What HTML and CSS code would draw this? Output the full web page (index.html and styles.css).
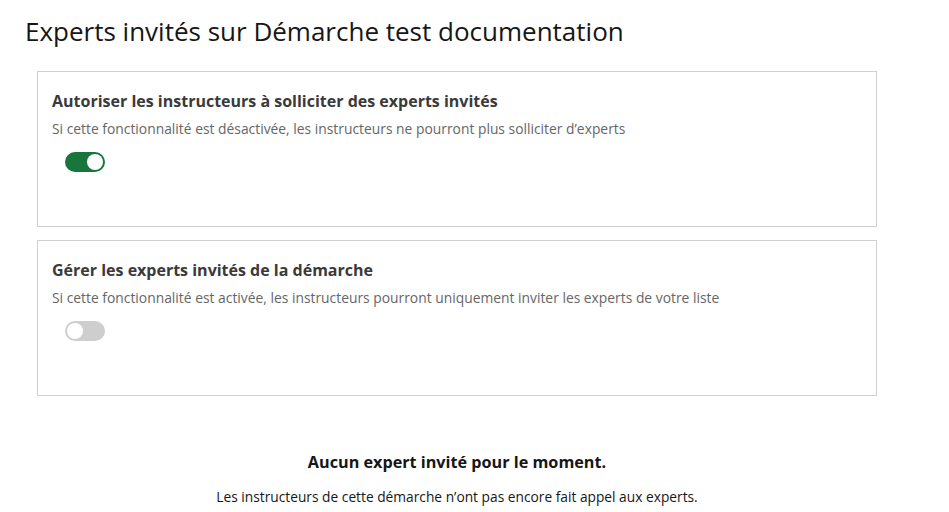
FILE: index.html
```html
<!DOCTYPE html>
<html lang="fr">
<head>
<meta charset="utf-8">
<link rel="stylesheet" href="styles.css">
</head>
<body>
<main class="page">
  <h1 class="title">Experts invités sur Démarche test documentation</h1>
  <section class="cards">
    <div class="card">
      <h2 class="card-title">Autoriser les instructeurs à solliciter des experts invités</h2>
      <p class="card-desc">Si cette fonctionnalité est désactivée, les instructeurs ne pourront plus solliciter d’experts</p>
      <span class="toggle toggle-on"><span class="knob"></span></span>
    </div>
    <div class="card">
      <h2 class="card-title">Gérer les experts invités de la démarche</h2>
      <p class="card-desc">Si cette fonctionnalité est activée, les instructeurs pourront uniquement inviter les experts de votre liste</p>
      <span class="toggle toggle-off"><span class="knob"></span></span>
    </div>
    <div class="empty">
      <p class="empty-title">Aucun expert invité pour le moment.</p>
      <p class="empty-desc">Les instructeurs de cette démarche n’ont pas encore fait appel aux experts.</p>
    </div>
  </section>
</main>
</body>
</html>
```
FILE: styles.css
```css
* { box-sizing: border-box; }
html, body { margin: 0; padding: 0; background: #fff; }
body { font-family: "Open Sans", "Liberation Sans", sans-serif; color: #161616; }
.page { padding: 13px 0 0 25px; }
.title { margin: 0; font-size: 26px; font-weight: 400; line-height: 36px; color: #161616; }
.cards { width: 840px; margin: 22px 0 0 12px; display: flex; flex-direction: column; gap: 13px; }
.card { border: 1px solid #d0d0d0; padding: 16px 14px 54px; display: flex; flex-direction: column; }
.card-title { margin: 0; font-size: 16px; font-weight: 700; line-height: 26px; color: #3a3a3a; }
.card-desc { margin: 4px 0 0; font-size: 13.85px; line-height: 22px; color: #666; }
.toggle { margin: 12px 0 0 13px; width: 40px; height: 20px; border-radius: 10px; position: relative; display: block; }
.toggle-on { background: #18753c; }
.toggle-off { background: #cecece; }
.knob { position: absolute; top: 2px; width: 16px; height: 16px; border-radius: 50%; background: #fff; }
.toggle-on .knob { right: 2px; }
.toggle-off .knob { left: 2px; }
.empty { margin-top: 41px; text-align: center; }
.empty-title { margin: 0; font-size: 16.2px; font-weight: 700; line-height: 24px; color: #161616; }
.empty-desc { margin: 11px 0 0; font-size: 13.75px; line-height: 24px; color: #161616; }
```
